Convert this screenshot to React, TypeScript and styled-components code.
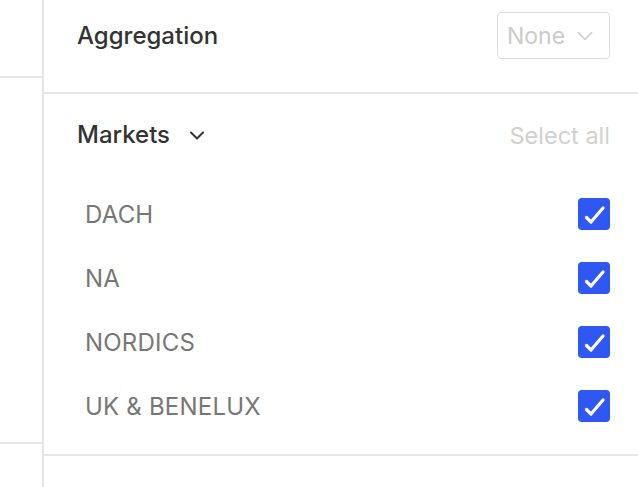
import styled, { createGlobalStyle } from 'styled-components';

const markets = ['DACH', 'NA', 'NORDICS', 'UK & BENELUX'];

const GlobalStyle = createGlobalStyle`
  html, body {
    margin: 0;
    padding: 0;
    background: #fff;
    overflow: hidden;
  }
  body {
    font-family: Inter, "Noto Sans", "Liberation Sans", sans-serif;
    color: #333;
  }
`;

const Chevron = ({ color, width = 14, stroke = 2 }: { color: string; width?: number; stroke?: number }) => (
  <svg width={width} height={width / 2 + 2} viewBox="0 0 14 9" fill="none">
    <path d="M1 1.5 L7 7.5 L13 1.5" stroke={color} strokeWidth={stroke} strokeLinecap="round" strokeLinejoin="round" />
  </svg>
);

const CheckBox = ({ checked }: { checked: boolean }) => (
  <Box $checked={checked}>
    {checked && (
      <svg width="32" height="32" viewBox="0 0 32 32" fill="none">
        <path d="M8.5 19.5 L13 24 L25 10" stroke="#fff" strokeWidth="3.2" strokeLinecap="round" strokeLinejoin="round" />
      </svg>
    )}
  </Box>
);

const App = () => {
  return (
    <>
      <GlobalStyle />
      <Layout>
        <SideColumn>
          <SideBlock $height={76} />
          <SideBlock $height={364} />
          <SideBlock $height={60} />
        </SideColumn>
        <Panel>
          <AggregationSection>
            <Title>Aggregation</Title>
            <SelectBox>
              <span>None</span>
              <Chevron color="#cfcfcf" width={16} stroke={1.5} />
            </SelectBox>
          </AggregationSection>

          <Section>
            <SectionHeader>
              <TitleToggle>
                <Title>Markets</Title>
                <Chevron color="#333" />
              </TitleToggle>
              <SelectAll>Select all</SelectAll>
            </SectionHeader>
            <List>
              {markets.map((m) => (
                <Row key={m}>
                  <RowLabel>{m}</RowLabel>
                  <CheckBox checked />
                </Row>
              ))}
            </List>
          </Section>

          <Section>
            <SectionHeader>
              <Title>Channels</Title>
              <SelectAll>Select all</SelectAll>
            </SectionHeader>
          </Section>
        </Panel>
      </Layout>
    </>
  );
};

export default App;

const Layout = styled.div`
  display: flex;
  width: 638px;
  height: 487px;
  overflow: hidden;
`;

const SideColumn = styled.div`
  width: 42px;
  flex-shrink: 0;
  border-right: 2px solid #e6e6e4;
  display: flex;
  flex-direction: column;
`;

const SideBlock = styled.div<{ $height: number }>`
  height: ${(p) => p.$height}px;
  flex-shrink: 0;
  border-bottom: 2px solid #e6e6e4;
`;

const Panel = styled.div`
  flex: 1;
  display: flex;
  flex-direction: column;
`;

const AggregationSection = styled.div`
  display: flex;
  align-items: center;
  justify-content: space-between;
  padding: 12px 28px 33px 33px;
  border-bottom: 2px solid #e6e6e4;
`;

const Title = styled.h2`
  margin: 0;
  font-size: 24px;
  font-weight: 500;
  line-height: 32px;
  color: #333;
  letter-spacing: 0;
`;

const SelectBox = styled.div`
  box-sizing: border-box;
  width: 113px;
  height: 47px;
  border: 1px solid #dcdcda;
  border-radius: 4px;
  display: flex;
  align-items: center;
  justify-content: space-between;
  padding: 0 16px 0 9px;
  font-size: 23px;
  color: #cbcbc9;
`;

const Section = styled.div`
  padding: 25px 28px 16px 33px;
  border-bottom: 2px solid #e6e6e4;
`;

const SectionHeader = styled.div`
  display: flex;
  align-items: center;
  justify-content: space-between;
  height: 32px;
`;

const TitleToggle = styled.div`
  display: flex;
  align-items: center;
  gap: 20px;
`;

const SelectAll = styled.span`
  font-size: 23.5px;
  color: #d0d0ce;
  cursor: pointer;
`;

const List = styled.div`
  margin-top: 31px;
  display: flex;
  flex-direction: column;
`;

const Row = styled.div`
  height: 64px;
  display: flex;
  align-items: center;
  justify-content: space-between;
  padding-left: 8px;
`;

const RowLabel = styled.span`
  font-size: 24px;
  color: #777775;
  letter-spacing: 0.2px;
`;

const Box = styled.div<{ $checked: boolean }>`
  width: 32px;
  height: 32px;
  border-radius: 4px;
  background: ${(p) => (p.$checked ? '#2f58f2' : '#fff')};
  border: ${(p) => (p.$checked ? 'none' : '2px solid #ccc')};
  display: flex;
  align-items: center;
  justify-content: center;
`;
